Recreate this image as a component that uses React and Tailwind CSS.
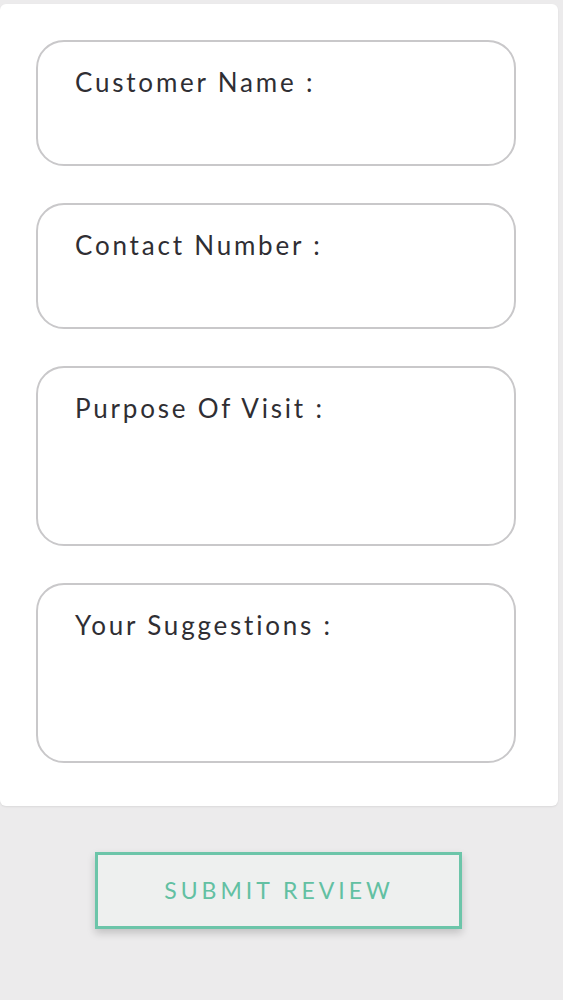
import React from 'react';

const fields = [
  { label: 'Customer Name :', tall: false },
  { label: 'Contact Number :', tall: false },
  { label: 'Purpose Of Visit :', tall: true },
  { label: 'Your Suggestions :', tall: true },
];

function Field({ label, tall }) {
  return (
    <div
      className={
        'ml-[36px] mr-[42px] rounded-[28px] border-2 border-[#c9c8ca] bg-white px-[37px] pt-[22px] ' +
        (tall ? 'h-[180px]' : 'h-[126px]')
      }
    >
      <label className="block text-[26px] leading-[36px] tracking-[2.8px] text-[#2f2e33]">
        {label}
      </label>
    </div>
  );
}

export default function App() {
  return (
    <div className="min-h-[1000px] bg-[#ecebec] pt-[4px] font-['Lato',sans-serif]">
      <div className="mr-[5px] flex flex-col gap-[37px] rounded-md bg-white pt-[36px] pb-[43px] shadow-[0_1px_2px_rgba(0,0,0,0.08)]">
        {fields.map((f) => (
          <Field key={f.label} label={f.label} tall={f.tall} />
        ))}
      </div>
      <div className="mr-[7px] flex justify-center pt-[46px]">
        <button className="h-[77px] w-[367px] border-[3px] border-[#6cc5a9] bg-[#eef0ef] pl-[2px] text-[23px] tracking-[4px] text-[#62c0a2] shadow-[0_4px_8px_rgba(0,0,0,0.18)]">
          SUBMIT REVIEW
        </button>
      </div>
    </div>
  );
}
